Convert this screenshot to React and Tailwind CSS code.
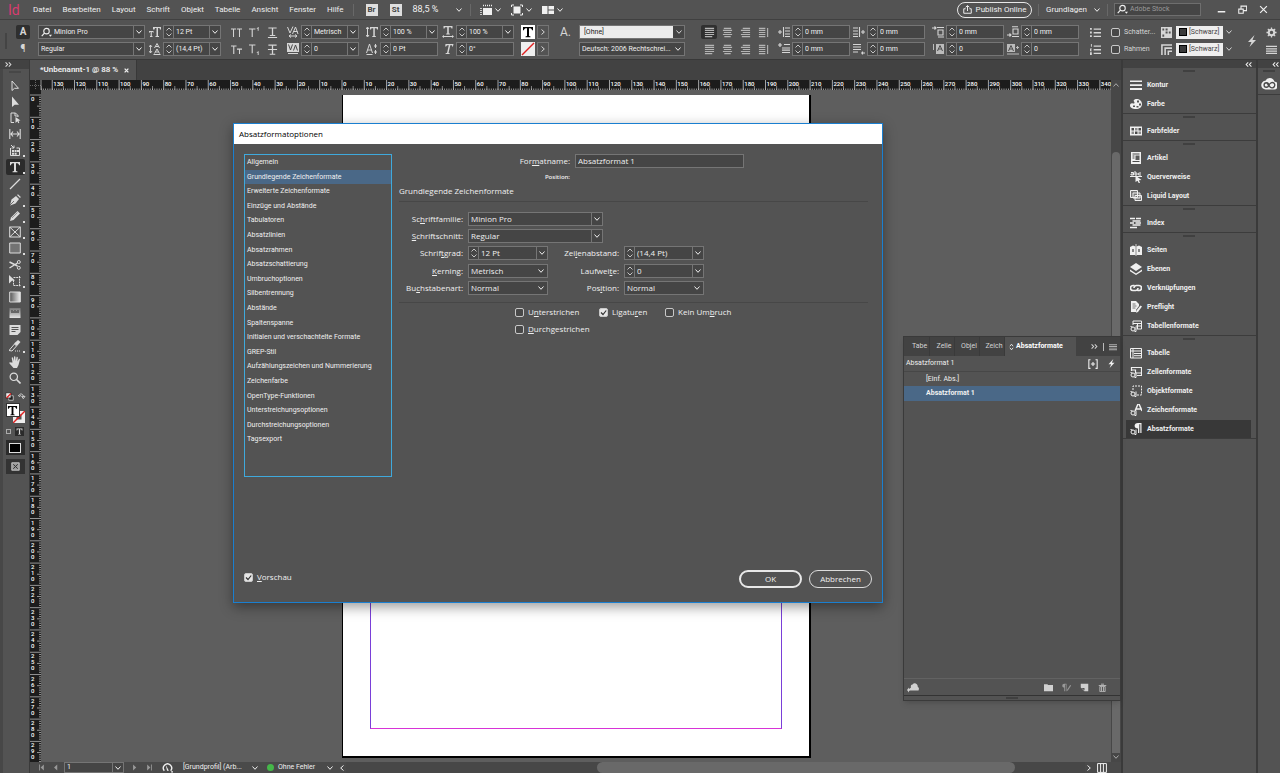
import clsx from 'clsx'

const MENUS = ['Datei', 'Bearbeiten', 'Layout', 'Schrift', 'Objekt', 'Tabelle', 'Ansicht', 'Fenster', 'Hilfe']

const CATEGORIES = [
  'Allgemein', 'Grundlegende Zeichenformate', 'Erweiterte Zeichenformate', 'Einzüge und Abstände',
  'Tabulatoren', 'Absatzlinien', 'Absatzrahmen', 'Absatzschattierung', 'Umbruchoptionen',
  'Silbentrennung', 'Abstände', 'Spaltenspanne', 'Initialen und verschachtelte Formate', 'GREP-Stil',
  'Aufzählungszeichen und Nummerierung', 'Zeichenfarbe', 'OpenType-Funktionen',
  'Unterstreichungsoptionen', 'Durchstreichungsoptionen', 'Tagsexport',
]

const DOCK = [
  [['Kontur', 'stroke'], ['Farbe', 'palette']],
  [['Farbfelder', 'swatches']],
  [['Artikel', 'article'], ['Querverweise', 'xref'], ['Liquid Layout', 'liquid']],
  [['Index', 'index']],
  [['Seiten', 'pages'], ['Ebenen', 'layers'], ['Verknüpfungen', 'links'], ['Preflight', 'preflight'], ['Tabellenformate', 'tableStyle']],
  [['Tabelle', 'table'], ['Zellenformate', 'cellStyle'], ['Objektformate', 'objectStyle'], ['Zeichenformate', 'charStyle'], ['Absatzformate', 'paraStyle']],
]

const TOOLS = [
  { name: 'Auswahl', icon: 'select' },
  { name: 'Direktauswahl', icon: 'direct' },
  { name: 'Seite', icon: 'pageTool' },
  { name: 'Lücke', icon: 'gap' },
  { name: 'Inhaltsaufnahme', icon: 'collect', more: true },
  { name: 'Text', icon: 'type', more: true, active: true },
  { name: 'Linienzeichner', icon: 'line' },
  { name: 'Zeichenstift', icon: 'pen', more: true },
  { name: 'Buntstift', icon: 'pencil', more: true },
  { name: 'Rechteckrahmen', icon: 'frame', more: true },
  { name: 'Rechteck', icon: 'rect', more: true },
  { name: 'Schere', icon: 'scissors', space: true },
  { name: 'Frei transformieren', icon: 'transform', more: true },
  { name: 'Verlaufsfarbfeld', icon: 'gradient' },
  { name: 'Weiche Verlaufskante', icon: 'feather' },
  { name: 'Notiz', icon: 'note', space: true },
  { name: 'Pipette', icon: 'eyedropper', more: true },
  { name: 'Hand', icon: 'hand' },
  { name: 'Zoom', icon: 'zoom' },
]

const styleMark = (
  <>
    <circle cx="3" cy="9" r="2" fill="none" stroke="currentColor" />
    <path d="M.5 6.5l2 .5M4.5 11.5h1.5v-5" fill="none" stroke="currentColor" />
  </>
)

// all glyphs are drawn on a 12x12 grid
const ICONS = {
  stroke: <path d="M0 1.500h12v1.500H0zM0 5.300h12v1.600H0zM0 9h12v2H0z" />,
  palette: <path fillRule="evenodd" d="M6.500 1C9.500 1 12 3 12 6s-2.500 5-6 5C2.500 11 0 9.500 0 7.500S1.500 5 3 5.500 5 4.500 4 3.500 4.500 1 6.500 1zM7 2.500v2h2v-2zM9 5.500v2h2v-2zM3 7.500v1.500h2V7.500zM6.500 8v1.500h2V8z" />,
  swatches: <><path d="M0 1.500h12v9H0z" /><path d="M1.500 3h2.500v2.500H1.500zM5 6.500h2.500V9H5zM8.500 3H11v2.500H8.500z" fill="#4a4a4a" /><path d="M5 3h2.500v2.500H5zM1.500 6.500H4V9H1.500zM8.500 6.500H11V9H8.500z" fill="#8c8c8c" /></>,
  article: <><path d="M1 0h10v12H1z" /><path d="M2.500 2h7M2.500 4h2M2.500 6h2M2.500 9.500h7" stroke="#4a4a4a" /><path d="M5.500 3.500H9.500V8h-4z" fill="#5a5a5a" /></>,
  xref: <><path d="M0 5.500h12" stroke="currentColor" /><path d="M1 1.500h2.500V4H1V3h2.500M5 0v4h2V2H5M11 2H8.700v2H11" fill="none" stroke="currentColor" /><path d="M5.500 4.500l6 4.500-2.600.3L10 12H8.700L7.500 9.700 5.500 11z" /></>,
  liquid: <path d="M.5.5h7v7h-7zM3 3h7v5H3zM5 5.500h6.500v5H5z" fill="#777" stroke="currentColor" />,
  index: <path d="M0 1.500h5M2.500 4h8M2.500 8h8M0 10.500h7M0 6h4M6 1.500h5M5.500 6H11" stroke="currentColor" strokeWidth="1.500" />,
  pages: <><path d="M0 3l3-1.500 2.500 1V11H0zM6.500 2.500l2.500-1L12 3v8H6.500z" /><path d="M6 0v12" stroke="currentColor" strokeWidth=".8" /><path d="M2 5h2v3H2zM8 5h2v3H8z" fill="#888" /></>,
  layers: <><path d="M6 0l6 4-6 4-6-4z" /><path d="M0 6.500l6 4 6-4v1.800l-6 3.700-6-3.700z" /></>,
  links: <path d="M4.500 3.500H3a2.500 2.500 0 000 5h2.500A2.400 2.400 0 008 6M7.500 8.500H9a2.500 2.500 0 000-5H6.500A2.400 2.400 0 004 6" fill="none" stroke="currentColor" strokeWidth="1.600" />,
  preflight: <><path d="M1 0h5l3 3v2L6 9v2H1z" /><path d="M10.500 4.500l1.500 1L8 11l-2 .8.300-2z" /><path d="M2.500 3h3M2.500 5h4M2.500 7h3" stroke="#555" strokeWidth=".8" /></>,
  tableStyle: <><path d="M3 5V1h8.500v8H7M3 3.500h8.500M6 6h5.500M7.500 3.500v5.500" fill="none" stroke="currentColor" />{styleMark}</>,
  cellStyle: <><path d="M1.500 5V1.500h10v8H7M1.500 4h4v3h6" fill="none" stroke="currentColor" strokeWidth="1.200" />{styleMark}</>,
  objectStyle: <><path d="M3 5V1h8.500v9H7" fill="none" stroke="currentColor" strokeDasharray="2 1" />{styleMark}</>,
  charStyle: <><path d="M5 7L8 0h1l3 7M6.200 5h4.600" fill="none" stroke="currentColor" strokeWidth="1.500" />{styleMark}</>,
  paraStyle: <><path d="M11.500 0v10h-1.200V1.200h-1V10H8V5.500C3.500 5.500 3.500 0 8 0z" />{styleMark}</>,
  table: <path d="M.5 1.500h11v9.500H.5zM.5 4h11M3 1.500V11M4 6.500h7M4 8.700h7" fill="none" stroke="currentColor" />,
  select: <path d="M3 1v9.500l2.500-2.200h4z" fill="none" stroke="currentColor" />,
  direct: <path d="M3 .5V11l2.700-2.300H10z" />,
  pageTool: <><path d="M5 10.500H2V1h4.500L9 3.500V5M6 1v3h3" fill="none" stroke="currentColor" /><path d="M6.500 5l5 3.500-2 .3.800 2-1 .4-.9-2L6.500 11z" /></>,
  gap: <path d="M.8 1v10M11.200 1v10M2 6h8M4 3.500L2 6l2 2.500M8 3.500L10 6 8 8.500" fill="none" stroke="currentColor" strokeWidth="1.100" />,
  collect: <><path d="M1.500 4v7.500h9V4H7.500M2 1l3 3M5 1.500V4H2.500" fill="none" stroke="currentColor" /><path d="M3 6h2v2H3zM5.600 6h2v2h-2zM8 6h2v2H8zM3 8.700h2v2H3zM5.600 8.700h2v2h-2z" /></>,
  type: <path d="M1 1h10v3.200H10C9.800 2.700 9.200 2.200 7 2.200V10l1.500.5v.7h-5v-.7L5 10V2.200C2.800 2.200 2.200 2.700 2 4.200H1z" />,
  line: <path d="M1 11L11 1" stroke="currentColor" strokeWidth="1.200" />,
  pen: <><path d="M1 11.500L2.500 5.500 7 2l3 3-3.500 4.500z" /><path d="M8 1l3 3 .8-1L9 .3z" /><path d="M1 11l4-4" stroke="#555" strokeWidth=".8" /></>,
  pencil: <><path d="M1 11l1-3.500L8.500 1 11 3.500 4.500 10z" /><path d="M3 8l5.500-5.500" stroke="#777" strokeWidth=".7" /></>,
  frame: <path d="M.7 1h10.600v10H.7zM.7 1l10.600 10M11.300 1L.7 11" fill="none" stroke="currentColor" />,
  rect: <path d="M.7 1h10.600v10H.7z" fill="#737373" stroke="currentColor" />,
  scissors: <><path d="M.5 3l8 4M.5 9l8-5" fill="none" stroke="currentColor" strokeWidth="1.400" /><circle cx="9.800" cy="3" r="1.500" fill="none" stroke="currentColor" /><circle cx="9.800" cy="8.800" r="1.500" fill="none" stroke="currentColor" /></>,
  transform: <><path d="M4.500 2.500h7M4.500 10.500h7M4.500 5v5.500M10.500 1v11" fill="none" stroke="currentColor" strokeDasharray="2 .7" /><path d="M0 0l6 5.500-3 .2L0 8.500z" /></>,
  gradient: <><defs><linearGradient id="grad"><stop offset="0" stopColor="#555" /><stop offset="1" stopColor="#eee" /></linearGradient></defs><path d="M.7 1h10.600v10H.7z" fill="url(#grad)" stroke="currentColor" /></>,
  feather: <><defs><linearGradient id="fade" x2="0" y2="1"><stop offset="0" stopColor="#777" /><stop offset="1" stopColor="#e4e4e4" /></linearGradient></defs><path d="M.5 1h11v10H.5z" fill="url(#fade)" /><path d="M2 3h2v1h1V3h2v1h1V3h2v3H2z" fill="#666" /></>,
  note: <><path d="M.5 1h11v7l-3 3h-8z" /><path d="M2.500 3.500h7M2.500 5.500h7M2.500 7.500h4" stroke="#555" /></>,
  eyedropper: <><path d="M0 10.500L5.500 4l2 2L3 11z" fill="none" stroke="currentColor" /><path d="M5 3.500L9 0l2.500 2L8 6z" /><path d="M6 11h6" stroke="currentColor" strokeDasharray="1 1" /></>,
  hand: <path d="M3.500 6.500L2.700 2c0-1 1.200-1 1.400-.2L5 5V.8C5 0 6.300 0 6.400.8L6.700 5l.8-3.700c.2-.8 1.300-.6 1.300.2L8.500 5.500l1.200-2.300c.5-.7 1.400-.2 1.200.5L9.500 9 8 12H4.500L.5 7.500C0 6.700 1 6 1.700 6.600z" />,
  zoom: <><circle cx="4.800" cy="4.800" r="3.700" fill="none" stroke="currentColor" strokeWidth="1.200" /><path d="M7.500 7.500l4 4" stroke="currentColor" strokeWidth="1.600" /></>,
  search: <><circle cx="6" cy="4.500" r="3" fill="none" stroke="currentColor" strokeWidth="1.200" /><path d="M4 6.500L.8 10" stroke="currentColor" strokeWidth="1.300" /><path d="M8.500 8.500h3.500L10.200 10.500z" /></>,
  bolt: <path d="M8.500 0L2 7h3.500L3.500 12 10 5H6.500z" />,
  menu: <path d="M0 2h12v1.400H0zM0 4.500h12v1.400H0zM0 7h12v1.400H0zM0 9.500h12v1.400H0z" />,
  gear: <><circle cx="6" cy="6" r="3" fill="none" stroke="currentColor" strokeWidth="2.200" /><path d="M6 .5V3M6 9v2.500M.5 6H3M9 6h2.500M2 2l2 2M8 8l2 2M10 2L8 4M4 8l-2 2" stroke="currentColor" strokeWidth="1.400" /></>,
  share: <path d="M3.500 5H1v6h10V5H8.500M6 8V1M3.500 3L6 .8 8.500 3" fill="none" stroke="currentColor" strokeWidth="1.300" />,
  cloud: (
    <>
      <path d="M3.500 10.800a3.200 3.200 0 01-.2-6.400A3.600 3.600 0 0110 4.800a3 3 0 01-.7 6z" />
      <circle cx="4" cy="7.500" r="1.700" fill="none" stroke="#4a4a4a" />
      <path d="M4.500 6L7 9.200a2 2 0 102.500-3.300C8 5 6.500 6.500 6 7.500" fill="none" stroke="#4a4a4a" />
    </>
  ),
  fontSize: <path d="M4 1h8v2.500h-1L10.500 2H9v8h1v1H6.500v-1h1V2H6l-.5 1.500H4zM0 5h4.500v1.800H4L3.700 6H2.800v4h.7v1H1v-1h.7V6H.9l-.3.8H0z" />,
  leading: <><path d="M1.500 2v8M0 4l1.500-2L3 4M0 8l1.500 2L3 8" fill="none" stroke="currentColor" strokeWidth=".9" /><path d="M5.500 5L8 .5 10.500 5M6.500 3.500h3M5.500 10.500L8 6l2.500 4.500M6.500 9h3M4.500 11.500h7" fill="none" stroke="currentColor" /></>,
  caps: <path d="M0 1.500h5.500v1.200H3.300V11H2.200V2.700H0zM6.500 1.500H12v1.200H9.800V11H8.700V2.700H6.500z" />,
  smallCaps: <path d="M0 1.500h6v1.200H3.600V11H2.400V2.700H0zM6.500 5H12v1.200H9.800V11H8.700V6.200H6.500z" />,
  superT: <path d="M0 1.500h7v1.200H4.100V11H2.900V2.700H0zM9.500 0h1v4h-1zM8.500 1h1v.8h-1z" />,
  subT: <path d="M0 .5h7v1.200H4.100V10H2.900V1.700H0zM9.500 8h1v4h-1zM8.500 9h1v.8h-1z" />,
  underline: <path d="M1.500.5h9v1.200H6.700v7H9v1H3v-1h2.300v-7H1.500zM1 11h10v1H1z" />,
  strike: <path d="M1.500.5h9v1.400H6.700v8.700H9v1H3v-1h2.300V1.900H1.500zM1 5.500h10v1H1z" />,
  kerning: <path d="M.5 1L3 7 6 .5M5.500 8L8.500 1l2.500 7M6.500 5.500h4M2 10h8M4 8.500L2 10l2 1.500M8 8.500l2 1.500-2 1.500" fill="none" stroke="currentColor" />,
  tracking: <><path d="M0 0h12v9H0z" /><path d="M1.500 1.500L3.500 7l2-5.500M6.500 7.500l2-5.500 2 5.500" fill="none" stroke="#4a4a4a" /><path d="M1 10.500h10" stroke="currentColor" /></>,
  vScale: <><path d="M1.500 1.500v9M0 3l1.500-2L3 3M0 9l1.500 2L3 9" fill="none" stroke="currentColor" /><path d="M4 1h8v2.500h-1L10.500 2.200H8.800V10h1v1H6.300v-1h1V2.200H5.500L5 3.500H4z" /></>,
  baseline: <path d="M.5 10L3.500 1l3 9M1.500 7h4M.5 11.500h6M9.500 1v4M8 3h3M9.500 7v4M8 9h3" fill="none" stroke="currentColor" />,
  hScale: <path d="M1.500 0h9v2.500h-1L9 1.300H6.800V7.500h1v1H4.200v-1h1V1.300H3l-.5 1.200h-1zM0 10.500L2 9v1h8V9l2 1.500L10 12v-1H2v1z" />,
  skew: <path d="M3.500 1h8l-.6 2.500H10l.1-1.300H8.300L6.500 10h1.200l-.3 1H3.500l.3-1H5l1.800-7.800H5L4.100 3.500h-.9z" />,
  alignL: <path d="M1 1.500h10M1 3.700h10M1 6h10M1 8.200h10M1 10.500h8" stroke="currentColor" strokeWidth="1.200" />,
  alignC: <path d="M2 1.500h8M1 3.700h10M2 6h8M1 8.200h10M2.500 10.500h7" stroke="currentColor" strokeWidth="1.200" />,
  alignR: <path d="M3 1.500h8M1 3.700h10M3 6h8M1 8.200h10M2 10.500h9" stroke="currentColor" strokeWidth="1.200" />,
  justify: <path d="M1 1.500h7M1 3.700h7M1 6h7M1 8.200h7M1 10.500h7M10.500 1v10" stroke="currentColor" strokeWidth="1.200" />,
  indentL: <path d="M0 6h4M2 4v4M5.500 1v10M7 2h5M7 5h5M7 8h5M7 10.500h5" fill="none" stroke="currentColor" strokeWidth="1.100" />,
  indentR: <path d="M8 6h4M10 4v4M6.500 1v10M0 2h5M0 5h5M0 8h5M0 10.500h5" fill="none" stroke="currentColor" strokeWidth="1.100" />,
  indentFirst: <path d="M0 2h4M2 0v4M6 1.500h6M4 5h8M4 7.200h8M4 9.500h8" stroke="currentColor" strokeWidth="1.200" />,
  indentLast: <path d="M0 1.500h8M0 4h8M0 6.500h8M0 9h5M8 10h4M9.500 8.500v3" stroke="currentColor" strokeWidth="1.200" />,
  spaceBefore: <path d="M0 2h4M2.500.5L4 2 2.500 3.500M5 1.500h7M6 4h5v5H6zM6 11h6" fill="none" stroke="currentColor" strokeWidth="1.100" />,
  spaceAfter: <path d="M0 9h4M2.500 7.500L4 9l-1.500 1.500M5 10.500h7M6 3h5v5H6zM5 .8h6" fill="none" stroke="currentColor" strokeWidth="1.100" />,
  dropLines: <><path d="M1 1h1v6H1zM4 1h8v10H4z" fillOpacity=".8" /><path d="M5.500 8L8 2.500 10.500 8M6.500 6h3" fill="none" stroke="#4a4a4a" /></>,
  dropChars: <><path d="M0 1h8v8H0zM9 4h3v1H9zM10 3h1v3h-1zM0 10.500h12v1H0z" fillOpacity=".8" /><path d="M1.500 8L4 2.500 6.500 8M2.500 6h3" fill="none" stroke="#4a4a4a" /></>,
  bullets: <path d="M0 1h2v2H0zM0 5h2v2H0zM0 9h2v2H0zM4 1.500h8V3H4zM4 5.500h8V7H4zM4 9.500h8V11H4z" />,
  numbers: <path d="M1 0h1v3H1zM0 5h2v1H1v1h1v1H0zM0 9h2v3H0zM4 1.500h8V3H4zM4 5.500h8V7H4zM4 9.500h8V11H4z" />,
  shade: <path d="M0 0h12v12H0zM1.500 1.500v2.300h2V1.500zM5 1.500v2.300h2.200V1.500zM8.500 5v2h2V5zM1.500 8.200v2.300h2V8.200zM5 5v2h2.200V5z" fillRule="evenodd" />,
  border: <path d="M1 12V1h11M4.500 12V4.500H12M8 12V8h4" fill="none" stroke="currentColor" strokeWidth="1.700" />,
  viewOpts: <><path d="M3 4h9v7H3z" /><path d="M3 1.500h9M1 4v7" stroke="currentColor" strokeDasharray="1 1" strokeWidth="1.500" /></>,
  screenMode: <><path d="M2.500 2.500h7v7h-7z" /><path d="M.5 3V1H3M9 1h2.500v2M11.500 9v2H9M3 11H.5V9" fill="none" stroke="currentColor" /></>,
  arrange: <path d="M0 2h5.500v8H0zM6.500 2H12v3.500H6.500zM6.500 6.500H12V10H6.500z" />,
  newGroup: <path d="M0 1.500h4.500l1 1.300H12V11H0z" />,
  clearPara: <><path d="M6 1v10H5V2H4v9H3V6C-.5 6-.5 1 3 1z" /><path d="M7 10l4.500-7" stroke="currentColor" strokeWidth="1.500" /></>,
  newItem: <path fillRule="evenodd" d="M1 1h10v10H6L1 6zM2 6.500l4 .2V10z" />,
  trash: <><path d="M1 2.500h10v1.300H1zM4 1h4v1H4z" /><path d="M2.500 4.500h7v7h-7zM4.700 5v6M7.300 5v6" fill="none" stroke="currentColor" /></>,
  cloudAdd: <path d="M3 9.500h8.500c.8-1.500.5-3-.7-3.500C11 3 7.500 1 5.500 3.500 4 3.500 3.500 5 4 6.500L2 8V6.500L0 9l2 2.500V10z" />,
  addBox: <path d="M3 .8H1v10.400h2M9 .8h2v10.400H9M3.500 6h5M6 3.500v5" fill="none" stroke="currentColor" strokeWidth="1.300" />,
  first: <path d="M2 1h1.500v10H2zM10 1v10L4.500 6z" />,
  prev: <path d="M9 1v10L3.500 6z" />,
  next: <path d="M3.500 1v10L9 6z" />,
  last: <path d="M8.500 1H10v10H8.500zM2 1v10l5.500-5z" />,
  flight: <><path d="M2.500 9.500a4.500 4.500 0 117 0" fill="none" stroke="currentColor" strokeWidth="1.500" /><path d="M4 3l3.500 6.500H5.500zM10 10h2v1.500h-2z" /></>,
  spread: <path d="M.7.7h10.600v10.600H.7zM4.300.7v10.600M7.700.7v10.600" fill="none" stroke="currentColor" strokeWidth="1.200" />,
  chevrons: <path d="M1 2.500l3.500 3.500L1 9.500M6.500 2.500L10 6l-3.500 3.500" fill="none" stroke="currentColor" strokeWidth="1.800" />,
  preview: <><path d="M1 1h10v10H1z" fill="#999" stroke="currentColor" /><path d="M3 3l6 6M9 3L3 9" stroke="#333" strokeWidth="1.300" /></>,
  defaults: <><path d="M5 5h6v6H5z" fill="#222" stroke="currentColor" /><path d="M1 1h7v7H1z" fill="#eee" stroke="#222" /><path d="M2 8L8 2" stroke="#e02020" strokeWidth="1.600" /></>,
  swap: <path d="M2 5C2 2 8 2 8 7M.5 4.500L2 7l2.500-2M5.500 6.500L8 10l2.500-3.500z" fill="none" stroke="currentColor" strokeWidth="1.300" />,
  close: <path d="M1.500 1.500l9 9M10.500 1.500l-9 9" stroke="currentColor" strokeWidth="1.600" />,
  tabClose: <path d="M1.500 1.500l9 9M10.500 1.500l-9 9" stroke="currentColor" strokeWidth="3" />,
  minimize: <path d="M1 8h10v2H1z" />,
  restore: <path d="M1 5.500h6V11H1zM4 5V1.500h7.500v6H7.500" fill="none" stroke="currentColor" strokeWidth="1.400" />,
}

function Icon({ name, className = 'size-3' }) {
  return (
    <svg viewBox="0 0 12 12" fill="currentColor" aria-hidden="true" className={clsx('block shrink-0', className)}>
      {ICONS[name]}
    </svg>
  )
}

function Chevron({ className }) {
  return (
    <svg viewBox="0 0 8 8" aria-hidden="true" className={clsx('block size-2 shrink-0', className)}>
      <path d="M1.500 2.500L4 5.300l2.500-2.800" fill="none" stroke="currentColor" strokeWidth="1" />
    </svg>
  )
}

function Stepper() {
  return (
    <button type="button" aria-label="Wert ändern" className="flex w-[10px] shrink-0 items-center justify-center border-r border-[#757575]">
      <svg viewBox="0 0 8 12" className="h-3 w-2" fill="none" stroke="#c4c4c4">
        <path d="M1.500 4.500L4 2l2.500 2.500M1.500 7.500L4 10l2.500-2.500" />
      </svg>
    </button>
  )
}

function Field({ label, value, id, stepper, arrow, lead, className = 'w-[58px]', text = 'text-[7px]' }) {
  return (
    <div className={clsx('flex h-[14px] shrink-0 border border-[#757575] bg-[#454545] text-[#f0f0f0]', className)}>
      {stepper && <Stepper />}
      {lead}
      <input id={id} aria-label={label} defaultValue={value} className={clsx('w-0 min-w-0 flex-1 bg-transparent px-[2px] outline-none', text)} />
      {arrow && (
        <button type="button" aria-label={`${label || value} wählen`} className="flex w-[11px] items-center justify-center border-l border-[#757575]">
          <Chevron />
        </button>
      )}
    </div>
  )
}

function Select({ label, id, value, className, text = 'text-[7px]' }) {
  return (
    <div className={clsx('relative flex h-[14px] items-center border border-[#757575] bg-[#454545] text-[#f0f0f0]', className)}>
      <select id={id} aria-label={label} className={clsx('h-full w-full appearance-none bg-transparent pl-[2px] outline-none', text)}>
        <option>{value}</option>
      </select>
      <Chevron className="pointer-events-none absolute right-[2px]" />
    </div>
  )
}

function Check({ label, checked, className = 'text-[8px]' }) {
  return (
    <label className={clsx('flex items-center gap-1 whitespace-nowrap', className)}>
      <span className="relative flex">
        <input
          type="checkbox"
          defaultChecked={checked}
          className="peer size-[9px] appearance-none rounded-[2px] border border-[#c8c8c8] bg-[#484848] checked:bg-[#e6e6e6]"
        />
        <svg viewBox="0 0 9 9" className="pointer-events-none absolute inset-0 hidden size-[9px] peer-checked:block">
          <path d="M2 4.500l2 2L7.200 2.500" fill="none" stroke="#333" strokeWidth="1.200" />
        </svg>
      </span>
      <span><Mnemonic text={label} /></span>
    </label>
  )
}

// "&" marks the access key, which is underlined
function Mnemonic({ text }) {
  const at = text.indexOf('&')
  if (at < 0) return text
  return (
    <>
      {text.slice(0, at)}
      <u>{text[at + 1]}</u>
      {text.slice(at + 2)}
    </>
  )
}

function Divider() {
  return <div className="h-3 w-px bg-[#686868]" />
}

function MenuBar() {
  return (
    <header className="flex h-5 shrink-0 items-center whitespace-nowrap border-b border-[#404040] text-[8px]">
      <span className="ml-2 w-[25px] text-[14px] leading-none text-[#d83c70]">Id</span>
      <nav className="flex gap-[11px]">
        {MENUS.map((m) => <button key={m}>{m}</button>)}
      </nav>
      <div className="ml-[9px] flex items-center gap-3">
        <Divider />
        <button className="size-3 bg-[#dedede] text-[8px] font-bold leading-3 text-[#444]">Br</button>
        <button className="size-3 bg-[#dedede] text-[8px] font-bold leading-3 text-[#444]">St</button>
      </div>
      <button className="ml-[11px] flex w-[50px] items-center justify-between text-[9px]">88,5 % <Chevron /></button>
      <div className="ml-[7px] flex items-center gap-[9px]">
        <Divider />
        {['viewOpts', 'screenMode', 'arrange'].map((n) => (
          <button key={n} aria-label={n} className="flex items-center gap-[2px]"><Icon name={n} /><Chevron /></button>
        ))}
      </div>
      <div className="flex-1" />
      <button className="flex h-4 w-[75px] items-center justify-center gap-1 rounded-full border border-[#e8e8e8]">
        <Icon name="share" className="size-[9px]" />Publish Online
      </button>
      <div className="ml-[6px]"><Divider /></div>
      <button className="ml-[7px] flex w-[55px] items-center justify-between">Grundlagen <Chevron /></button>
      <div className="ml-[6px]"><Divider /></div>
      <label className="ml-[6px] flex h-[13px] w-[87px] items-center gap-[2px] border border-[#6e6e6e] bg-[#454545] px-[2px]">
        <Icon name="search" className="size-[11px]" />
        <input aria-label="Adobe Stock" placeholder="Adobe Stock" className="w-0 flex-1 bg-transparent text-[7px] outline-none placeholder:text-[#999]" />
      </label>
      <div className="ml-[16px] mr-[12px] flex gap-[12px]">
        {[['minimize', 'Minimieren'], ['restore', 'Wiederherstellen'], ['close', 'Schließen']].map(([n, l]) => (
          <button key={n} aria-label={l}><Icon name={n} className="size-[9px]" /></button>
        ))}
      </div>
    </header>
  )
}

function Pair({ children, className }) {
  return <div className={clsx('flex shrink-0 flex-col gap-[3px]', className)}>{children}</div>
}

function NumField({ icon, ...rest }) {
  return (
    <div className="flex items-center gap-[2px]">
      <Icon name={icon} />
      <Field stepper {...rest} />
    </div>
  )
}

function IconGrid({ rows, className, active, tone }) {
  return (
    <Pair className={className}>
      {rows.map((row, r) => (
        <div key={r} className={clsx('flex h-[14px] justify-between', tone)}>
          {row.map((n, i) => (
            <button key={n + i} aria-label={n} className={clsx('flex w-4 items-center justify-center', active && r === 0 && i === 0 && 'rounded-[2px] bg-[#303030]')}>
              <Icon name={n} className="size-[11px]" />
            </button>
          ))}
        </div>
      ))}
    </Pair>
  )
}

function SwatchSelect({ label }) {
  return (
    <div className="flex h-[14px] items-center">
      <div className="flex h-[13px] w-[47px] items-center bg-[#eee] pl-[3px]">
        <span className="size-2 border border-black bg-[#3a3a3a]" />
        <input aria-label={label} defaultValue="[Schwarz]" className="w-0 flex-1 bg-transparent pl-[2px] text-[7px] text-[#444] outline-none" />
      </div>
      <button aria-label={`${label} wählen`} className="flex w-[11px] justify-center"><Chevron /></button>
    </div>
  )
}

function ControlBar() {
  return (
    <div className="flex h-10 shrink-0 items-start border-b border-[#383838] pt-[5px] text-[#d6d6d6]">
      <div className="ml-[5px] mt-2 h-4 w-[2px] bg-[#444]" />
      <Pair className="ml-[9px] w-[14px]">
        <button className="h-[14px] rounded-[2px] bg-[#2f2f2f] text-[10px] font-bold leading-[14px]">A</button>
        <button className="h-[14px] text-[10px] leading-[14px]">¶</button>
      </Pair>
      <Pair className="ml-2">
        <Field label="Schriftfamilie" value="Minion Pro" arrow className="w-[107px]" lead={<Icon name="search" className="ml-[2px] size-[11px] self-center" />} />
        <Field label="Schriftschnitt" value="Regular" arrow className="w-[107px]" />
      </Pair>
      <Pair className="ml-1">
        <NumField icon="fontSize" label="Schriftgrad" value="12 Pt" arrow />
        <NumField icon="leading" label="Zeilenabstand" value="(14,4 Pt)" arrow />
      </Pair>
      <IconGrid className="ml-[7px] w-[52px]" rows={[['caps', 'superT', 'underline'], ['smallCaps', 'subT', 'strike']]} />
      <Pair className="ml-[7px]">
        <NumField icon="kerning" label="Kerning" value="Metrisch" arrow />
        <NumField icon="tracking" label="Laufweite" value="0" arrow />
      </Pair>
      <Pair className="ml-[7px]">
        <NumField icon="vScale" label="Vertikale Skalierung" value="100 %" arrow />
        <NumField icon="baseline" label="Grundlinienversatz" value="0 Pt" />
      </Pair>
      <Pair className="ml-1">
        <NumField icon="hScale" label="Horizontale Skalierung" value="100 %" arrow />
        <NumField icon="skew" label="Neigung" value="0°" />
      </Pair>
      <Pair className="ml-[7px]">
        <div className="flex gap-[2px]">
          <button aria-label="Fläche" className="flex size-[14px] items-center justify-center bg-white text-black"><Icon name="type" /></button>
          <button aria-label="Flächenoptionen" className="flex h-[14px] w-3 items-center justify-center border border-[#757575]"><Chevron className="-rotate-90" /></button>
        </div>
        <div className="flex gap-[2px]">
          <button aria-label="Kontur" className="size-[14px] bg-[#eee]">
            <svg viewBox="0 0 14 14"><path d="M1 13L13 1" stroke="#e02020" strokeWidth="1.500" /></svg>
          </button>
          <button aria-label="Konturoptionen" className="flex h-[14px] w-3 items-center justify-center border border-[#757575]"><Chevron className="-rotate-90" /></button>
        </div>
      </Pair>
      <span className="ml-[11px] w-[14px] text-[12px] leading-[14px]">A.</span>
      <Pair className="ml-[5px] w-[106px]">
        <div className="flex h-[14px] border border-[#757575] bg-[#454545]">
          <input aria-label="Zeichenformat" defaultValue="[Ohne]" className="w-0 flex-1 bg-[#ececec] px-1 text-[7px] text-[#222] outline-none" />
          <button aria-label="Zeichenformat wählen" className="flex w-[11px] items-center justify-center"><Chevron /></button>
        </div>
        <Select label="Sprache" value="Deutsch: 2006 Rechtschrei..." />
      </Pair>
      <IconGrid active tone="text-[#b4b4b4]" className="ml-4 w-[70px]" rows={[['alignL', 'alignC', 'alignR', 'justify'], ['alignL', 'alignC', 'alignR', 'justify']]} />
      <Pair className="ml-[7px]">
        <NumField icon="indentL" label="Einzug links" value="0 mm" />
        <NumField icon="indentFirst" label="Einzug erste Zeile" value="0 mm" />
      </Pair>
      <Pair className="ml-[3px]">
        <NumField icon="indentR" label="Einzug rechts" value="0 mm" />
        <NumField icon="indentLast" label="Einzug letzte Zeile" value="0 mm" />
      </Pair>
      <Pair className="ml-[7px]">
        <NumField icon="spaceBefore" label="Abstand davor" value="0 mm" />
        <NumField icon="dropLines" label="Initialhöhe" value="0" />
      </Pair>
      <Pair className="ml-[3px]">
        <NumField icon="spaceAfter" label="Abstand danach" value="0 mm" />
        <NumField icon="dropChars" label="Initialzeichen" value="0" />
      </Pair>
      <IconGrid className="ml-2 w-4" rows={[['bullets'], ['numbers']]} />
      <Pair className="ml-2 w-[46px]">
        <Check label="Schatter..." className="h-[14px] text-[7px]" />
        <Check label="Rahmen" className="h-[14px] text-[7px]" />
      </Pair>
      <IconGrid className="ml-px w-4" rows={[['shade'], ['border']]} />
      <Pair className="ml-[2px]">
        <SwatchSelect label="Schattierungsfarbe" />
        <SwatchSelect label="Rahmenfarbe" />
      </Pair>
      <button aria-label="Schnell anwenden" className="ml-[12px] mt-[10px]"><Icon name="bolt" /></button>
      <IconGrid className="ml-[5px] w-4" rows={[['gear'], ['menu']]} />
    </div>
  )
}

function Toolbar() {
  return (
    <aside className="flex w-[30px] shrink-0 flex-col border-r border-[#3a3a3a] text-[#dcdcdc]">
      <div className="flex h-[9px] items-center bg-[#424242] pl-[5px]"><Icon name="chevrons" className="size-[7px]" /></div>
      <div className="flex flex-1 flex-col items-center border-l-[3px] border-[#474747] pr-[2px] pt-[2px]">
        <div className="mb-[5px] h-[2px] w-3 bg-[#474747]" />
        {TOOLS.map((t) => (
          <button
            key={t.name}
            aria-label={t.name}
            className={clsx('relative flex h-4 w-[19px] shrink-0 items-center justify-center', t.active && 'my-px rounded-[2px] bg-[#2b2b2b]', t.space && 'mt-px')}
          >
            <Icon name={t.icon} />
            {t.more && <span className="absolute bottom-px right-0 size-[2px] bg-[#ddd]" />}
          </button>
        ))}
        <div className="mt-[3px] flex h-[14px] items-center gap-[4px]">
          <Icon name="defaults" className="size-[9px]" />
          <Icon name="swap" className="size-[8px]" />
        </div>
        <div className="relative h-5 w-[19px]">
          <svg viewBox="0 0 12 12" className="absolute bottom-0 right-0 size-3"><path d="M0 0h12v12H0z" fill="#eee" /><path d="M3.500 3.500h5v5h-5z" fill="#535353" /><path d="M0 12L12 0" stroke="#e02020" strokeWidth="1.400" /></svg>
          <button aria-label="Fläche" className="absolute left-0 top-0 flex size-[14px] items-center justify-center border border-[#333] bg-white text-black"><Icon name="type" className="size-[11px]" /></button>
        </div>
        <div className="mt-[2px] flex h-3 items-center gap-1">
          <span className="size-[5px] border border-[#aaa]" />
          <span className="flex size-[9px] items-center justify-center bg-[#2b2b2b]"><Icon name="type" className="size-[7px]" /></span>
        </div>
        <button aria-label="Farbe anwenden" className="mt-[3px] flex h-[15px] w-[19px] items-center justify-center bg-[#2b2b2b]"><span className="h-[10px] w-3 border border-[#ddd] bg-black" /></button>
        <button aria-label="Bildschirmmodus" className="mt-1 flex h-[15px] w-[19px] items-center justify-center bg-[#333]"><Icon name="preview" className="size-[9px]" /></button>
      </div>
    </aside>
  )
}

const MM = 2.229
const range = (from, to) => Array.from({ length: to - from }, (_, i) => from + i)

function HorizontalRuler() {
  const zero = 312
  return (
    <svg className="block h-[10px] w-full bg-[#1c1c1c]" aria-label="Horizontales Lineal">
      {range(-68, 172).map((n) => (
        <path key={n} d={`M${zero + n * 5 * MM} ${n % 2 ? 6 : 0}V10`} stroke="#c8c8c8" strokeWidth={n % 2 ? 0.6 : 0.8} />
      ))}
      {range(-340, 860).map((n) => <path key={n} d={`M${zero + n * MM} 8.500V10`} stroke="#c8c8c8" strokeWidth=".7" />)}
      {range(-13, 35).map((n) => (
        <text key={n} x={zero + n * 10 * MM + 1} y="6" fontSize="6" fontWeight="500" fill="#fff">{Math.abs(n * 10)}</text>
      ))}
      <path d="M0 0h11v10H0z" fill="#1c1c1c" />
      <path d="M5.500 0v10M0 5.500h11" stroke="#666" strokeDasharray="1 1" />
      <path d="M11 0v10" stroke="#ccc" strokeWidth=".7" />
    </svg>
  )
}

function VerticalRuler() {
  const zero = 5
  return (
    <svg className="block h-full w-[11px] shrink-0 bg-[#1c1c1c]" aria-label="Vertikales Lineal">
      {range(0, 310).map((n) => (
        <path key={n} d={`M${n % 10 ? (n % 5 ? 9 : 7) : 0} ${zero + n * MM}H11`} stroke="#c8c8c8" strokeWidth=".7" />
      ))}
      {range(0, 30).map((n) =>
        String(n * 10).split('').map((d, i) => (
          <text key={`${n}-${i}`} x="1" y={zero + n * 10 * MM + 6 + i * 6} fontSize="6" fontWeight="500" fill="#fff">{d}</text>
        ))
      )}
    </svg>
  )
}

function StatusBar() {
  return (
    <footer className="flex h-[11px] shrink-0 items-center whitespace-nowrap bg-[#4a4a4a] text-[7px]">
      <div className="flex w-[34px] justify-between pl-2 pr-[5px] text-[#999]">
        <button aria-label="Erste Seite"><Icon name="first" className="size-[7px]" /></button>
        <button aria-label="Vorherige Seite"><Icon name="prev" className="size-[7px]" /></button>
      </div>
      <Field label="Seite" value="1" arrow className="w-[60px] h-[11px]!" />
      <div className="flex w-[29px] justify-between pl-[7px] text-[#999]">
        <button aria-label="Nächste Seite"><Icon name="next" className="size-[7px]" /></button>
        <button aria-label="Letzte Seite"><Icon name="last" className="size-[7px]" /></button>
      </div>
      <Icon name="flight" className="ml-[9px] size-[11px]" />
      <button className="ml-[10px] flex w-[76px] items-center justify-between">[Grundprofil] (Arb... <Chevron /></button>
      <span className="ml-2 size-[7px] rounded-full bg-[#45b749]" />
      <button className="ml-1 flex w-[56px] items-center justify-between">Ohne Fehler <Chevron /></button>
      <Chevron className="ml-1 rotate-90" />
      <div className="flex h-full flex-1 bg-[#474747]">
        <div className="flex-[253]" />
        <div className="flex-[421] rounded-full bg-[#696969]" />
        <div className="flex-[70]" />
      </div>
      <Chevron className="-rotate-90" />
      <Icon name="spread" className="mx-1 size-[10px]" />
      <div className="w-[10px]" />
    </footer>
  )
}

function Workspace() {
  return (
    <main className="flex min-w-0 flex-1 flex-col">
      <div className="flex h-5 shrink-0 bg-[#424242]">
        <div className="flex w-[107px] items-center gap-[6px] whitespace-nowrap border-r border-[#383838] bg-[#535353] pl-[10px] text-[8px] font-semibold">
          *Unbenannt-1 @ 88 %
          <button aria-label="Tab schließen"><Icon name="tabClose" className="size-[5px]" /></button>
        </div>
      </div>
      <div className="flex min-h-0 flex-1">
        <div className="flex min-w-0 flex-1 flex-col">
          <HorizontalRuler />
          <div className="flex min-h-0 flex-1 bg-[#5e5e5e]">
            <VerticalRuler />
            <div className="min-w-0 flex-1 overflow-hidden pt-[5px]">
              <div className="mx-auto h-[663px] w-[469px] border-b-2 border-l border-r-2 border-black bg-white px-[27px] pb-[27px] pt-[28px]">
                <div className="h-full border border-x-[#7a3fd8] border-y-[#d733d7]" />
              </div>
            </div>
          </div>
        </div>
        <div className="flex w-[10px] shrink-0 flex-col items-center bg-[#474747] py-px text-[#aaa]">
          <Chevron className="rotate-180" />
          <div className="mt-[63px] w-[8px] flex-1 rounded-t-full bg-[#696969]" />
          <Chevron />
        </div>
      </div>
      <StatusBar />
    </main>
  )
}

function Dock() {
  return (
    <>
      <aside className="flex w-[135px] shrink-0 flex-col border-l-2 border-[#3a3a3a]">
        <div className="flex h-2 items-center justify-end bg-[#424242] pr-1"><Icon name="chevrons" className="size-[7px] rotate-180" /></div>
        {DOCK.map((group) => (
          <section key={group[0][0]} className="flex flex-col gap-px border-b border-[#3c3c3c] pl-[3px] pr-[5px]">
            <div className="flex h-[7px] justify-center pt-[2px]"><div className="h-[2px] w-3 bg-[#404040]" /></div>
            {group.map(([label, icon]) => (
              <button
                key={label}
                className={clsx('flex h-[18px] items-center gap-[5px] pl-1 text-[7px] font-bold', label === 'Absatzformate' && 'bg-[#383838]')}
              >
                <Icon name={icon} />{label}
              </button>
            ))}
          </section>
        ))}
      </aside>
      <aside className="w-6 shrink-0 border-l-2 border-[#3a3a3a]">
        <div className="flex h-2 items-center justify-end bg-[#424242] pr-px"><Icon name="chevrons" className="size-[7px] rotate-180" /></div>
        <div className="flex h-[27px] flex-col items-center border-b border-[#3c3c3c] pt-[2px]">
          <div className="h-[2px] w-3 bg-[#404040]" />
          <button aria-label="CC Libraries" className="mt-[3px]"><Icon name="cloud" className="size-4" /></button>
        </div>
      </aside>
    </>
  )
}

function StylesPanel() {
  return (
    <section className="absolute left-[903px] top-[336px] flex h-[365px] w-[218px] flex-col border border-[#3a3a3a] bg-[#535353] text-[7px] shadow-md">
      <div className="flex h-[19px] shrink-0 items-stretch bg-[#424242] text-[#d4d4d4]">
        {['Tabe', 'Zelle', 'Objel', 'Zeich'].map((t) => (
          <button key={t} className="w-[25px] overflow-hidden border-r border-[#3a3a3a] pl-1 first:w-[26px] first:pl-[6px]">{t}</button>
        ))}
        <button className="flex w-[71px] items-center gap-[2px] bg-[#535353] pl-1 font-bold text-white">
          <svg viewBox="0 0 6 10" className="h-2 w-[5px]" fill="none" stroke="currentColor"><path d="M1 4l2-2.500L5 4M1 6l2 2.500L5 6" /></svg>
          Absatzformate
        </button>
        <div className="ml-auto flex items-center gap-[5px] pr-[3px]">
          <Icon name="chevrons" className="size-[7px]" />
          <span className="h-2 w-px bg-[#bbb]" />
          <button aria-label="Bedienfeldmenü"><Icon name="menu" className="size-[8px] text-[#b0b0b0]" /></button>
        </div>
      </div>
      <div className="flex h-4 shrink-0 items-center gap-[9px] border-b border-[#474747] pl-[2px] pr-1">
        <span className="flex-1">Absatzformat 1</span>
        <button aria-label="Neue Formatgruppe"><Icon name="addBox" className="size-[10px]" /></button>
        <button aria-label="Schnell anwenden"><Icon name="bolt" className="size-[9px]" /></button>
      </div>
      <ul className="flex-1">
        <li className="flex h-[14px] items-center pl-[22px]">[Einf. Abs.]</li>
        <li className="flex h-[15px] items-center bg-[#4a6887] pl-[22px] font-bold">Absatzformat 1</li>
      </ul>
      <div className="flex h-[17px] shrink-0 items-center gap-[9px] border-t border-[#626262] pl-[3px] pr-[13px] text-[#d0d0d0]">
        <Icon name="cloudAdd" className="size-[12px]" />
        <div className="flex-1" />
        {['newGroup', 'clearPara', 'newItem', 'trash'].map((n) => (
          <button key={n} aria-label={n}><Icon name={n} className={clsx('size-[9px]', n === 'clearPara' && 'text-[#999]')} /></button>
        ))}
      </div>
      <div className="flex h-[5px] shrink-0 items-center justify-center border-t border-[#333]"><div className="h-[2px] w-3 bg-[#404040]" /></div>
    </section>
  )
}

function FormLabel({ htmlFor, text }) {
  return <label htmlFor={htmlFor} className="whitespace-nowrap text-right"><Mnemonic text={text} /></label>
}

function StyleDialog() {
  return (
    <form
      role="dialog"
      aria-labelledby="dialog-title"
      className="absolute left-[233px] top-[123px] flex h-[480px] w-[650px] flex-col border border-[#1a7fd0] bg-[#535353] font-['Open_Sans',sans-serif] text-[8px] shadow-[0_4px_12px_rgba(0,0,0,0.4)]"
    >
      <h1 id="dialog-title" className="flex h-5 shrink-0 items-center bg-white pl-[5px] text-[8px] text-black">Absatzformatoptionen</h1>
      <div className="flex flex-1 pl-[10px] pt-[10px]">
        <ul className="flex h-[323px] w-[148px] shrink-0 flex-col border border-[#3fa9dc] pb-[29px] font-[Roboto,sans-serif] text-[7px]">
          {CATEGORIES.map((c, i) => (
            <li key={c} className={clsx('flex flex-1 items-center whitespace-nowrap pl-[2px]', i === 1 && 'bg-[#4a6887]')}>{c}</li>
          ))}
        </ul>
        <div className="flex-1 pl-[7px] pr-[14px]">
          <div className="grid grid-cols-[171px_169px] items-center gap-x-[5px]">
            <FormLabel htmlFor="name" text="For&matname:" />
            <Field id="name" value="Absatzformat 1" className="w-full" text="text-[8px]" />
          </div>
          <p className="mt-1 w-[171px] text-right text-[6px] font-semibold leading-[10px]">Position:</p>
          <h2 className="mt-[3px] border-b border-[#474747] pb-1 text-[8px] leading-3">Grundlegende Zeichenformate</h2>
          <div className="mt-2 grid h-[87px] auto-rows-fr grid-cols-[64px_80px_66px_80px] items-center gap-x-[5px]">
            <FormLabel htmlFor="family" text="Sc&hriftfamilie:" />
            <div className="col-span-3"><Field id="family" value="Minion Pro" arrow className="w-[135px]" text="text-[8px]" /></div>
            <FormLabel htmlFor="style" text="&Schriftschnitt:" />
            <div className="col-span-3"><Field id="style" value="Regular" arrow className="w-[135px]" text="text-[8px]" /></div>
            <FormLabel htmlFor="size" text="Schrif&tgrad:" />
            <Field id="size" value="12 Pt" stepper arrow className="w-20" text="text-[8px]" />
            <FormLabel htmlFor="leading" text="Zei&lenabstand:" />
            <Field id="leading" value="(14,4 Pt)" stepper arrow className="w-20" text="text-[8px]" />
            <FormLabel htmlFor="kerning" text="&Kerning:" />
            <Select id="kerning" value="Metrisch" text="text-[8px]" />
            <FormLabel htmlFor="tracking" text="Laufwei&te:" />
            <Field id="tracking" value="0" stepper arrow className="w-20" text="text-[8px]" />
            <FormLabel htmlFor="case" text="Bu&chstabenart:" />
            <Select id="case" value="Normal" text="text-[8px]" />
            <FormLabel htmlFor="position" text="Pos&ition:" />
            <Select id="position" value="Normal" text="text-[8px]" />
          </div>
          <div className="mt-[5px] grid grid-cols-[84px_66px_70px] gap-y-[3px] border-t border-[#474747] pl-[116px] pt-[2px] leading-[14px]">
            <Check label="U&nterstrichen" />
            <Check label="Ligatu&ren" checked />
            <Check label="Kein Um&bruch" />
            <Check label="&Durchgestrichen" />
          </div>
        </div>
      </div>
      <div className="flex h-[32px] shrink-0 items-start gap-[7px] pl-[10px] pr-[10px]">
        <Check label="&Vorschau" checked className="flex-1 pt-px" />
        <button type="button" className="h-[18px] w-[63px] rounded-full border-2 border-[#e8e8e8] text-[8px] leading-none">OK</button>
        <button type="button" className="h-[18px] w-[63px] rounded-full border border-[#dcdcdc] text-[8px] leading-none">Abbrechen</button>
      </div>
    </form>
  )
}

export default function App() {
  return (
    <div className="relative flex h-screen flex-col overflow-hidden bg-[#535353] font-[Roboto,sans-serif] text-[#f0f0f0]">
      <MenuBar />
      <ControlBar />
      <div className="flex min-h-0 flex-1">
        <Toolbar />
        <Workspace />
        <Dock />
      </div>
      <StylesPanel />
      <StyleDialog />
    </div>
  )
}
